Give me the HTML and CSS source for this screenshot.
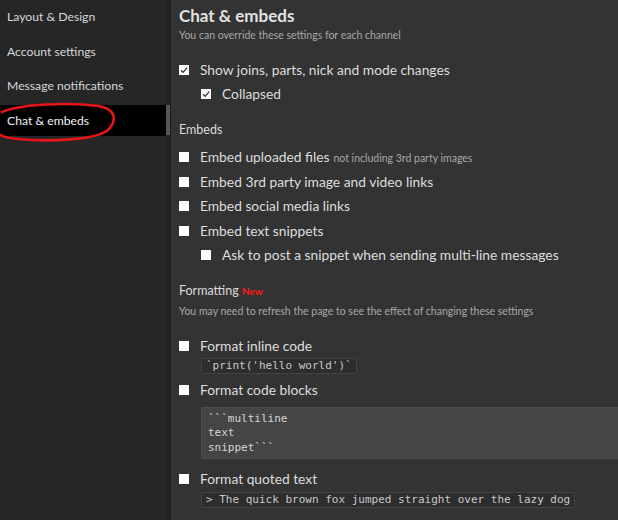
FILE: index.html
```html
<!DOCTYPE html>
<html>
<head>
<meta charset="utf-8">
<link rel="stylesheet" href="styles.css">
</head>
<body>
<div class="app">
  <nav class="sidebar">
    <div class="nav-item">Layout &amp; Design</div>
    <div class="nav-item">Account settings</div>
    <div class="nav-item">Message notifications</div>
    <div class="nav-item active">Chat &amp; embeds</div>
    <svg class="annot" width="130" height="50" viewBox="0 0 130 50">
      <path d="M2 10 C 20 2, 70 0, 98 4 C 118 7, 116 20, 108 28 C 96 38, 50 40, 18 37 C 6 36, 0 34, -2 31" fill="none" stroke="#e8141c" stroke-width="2.6" stroke-linecap="round"/>
    </svg>
  </nav>
  <div class="scroll"><div class="thumb"></div></div>
  <main class="main">
    <h1 class="title">Chat &amp; embeds</h1>
    <div class="sub">You can override these settings for each channel</div>

    <div class="group first">
      <div class="row"><span class="cb checked"><svg viewBox="0 0 10 10"><path d="M2 5.2 L4.2 7.3 L8.2 2.6" fill="none" stroke="#333" stroke-width="1.3"/></svg></span>Show joins, parts, nick and mode changes</div>
      <div class="row indent"><span class="cb checked"><svg viewBox="0 0 10 10"><path d="M2 5.2 L4.2 7.3 L8.2 2.6" fill="none" stroke="#333" stroke-width="1.3"/></svg></span>Collapsed</div>
    </div>

    <h2 class="section">Embeds</h2>
    <div class="group embeds">
      <div class="row"><span class="cb"></span>Embed uploaded files <small class="note">not including 3rd party images</small></div>
      <div class="row"><span class="cb"></span>Embed 3rd party image and video links</div>
      <div class="row"><span class="cb"></span>Embed social media links</div>
      <div class="row"><span class="cb"></span>Embed text snippets</div>
      <div class="row indent"><span class="cb"></span>Ask to post a snippet when sending multi-line messages</div>
    </div>

    <h2 class="section fmt">Formatting <span class="new">New</span></h2>
    <div class="sub">You may need to refresh the page to see the effect of changing these settings</div>

    <div class="group formats">
      <div class="row"><span class="cb"></span>Format inline code</div>
      <div class="example"><code class="inline">`print('hello world')`</code></div>
      <div class="row r2"><span class="cb"></span>Format code blocks</div>
      <pre class="block">```multiline
text
snippet```</pre>
      <div class="row r3"><span class="cb"></span>Format quoted text</div>
      <div class="example"><code class="inline">&gt; The quick brown fox jumped straight over the lazy dog</code></div>
    </div>
  </main>
</div>
</body>
</html>
```
FILE: styles.css
```css
html, body {
  margin: 0;
  padding: 0;
  background: #333333;
  height: 100%;
  overflow: hidden;
}
.app {
  display: flex;
  height: 520px;
  font-family: Lato, "Open Sans", sans-serif;
}
.sidebar {
  position: relative;
  width: 166px;
  flex: none;
  background: #262626;
  padding-top: 1px;
  display: flex;
  flex-direction: column;
  gap: 3.5px;
}
.nav-item {
  height: 31px;
  line-height: 31px;
  padding-left: 7px;
  font-size: 12.2px;
  color: #d3d8dc;
  white-space: nowrap;
}
.nav-item.active {
  background: #000;
  color: #eef2f5;
}
.annot {
  position: absolute;
  left: 0;
  top: 102px;
  overflow: visible;
}
.scroll {
  width: 4px;
  flex: none;
  background: #232323;
  border-right: 1px solid #1c1c1c;
  padding-top: 105px;
}
.thumb {
  height: 30px;
  background: #565656;
}
.main {
  flex: 1;
  padding-left: 8px;
  color: #dedede;
  min-width: 0;
}
.title {
  margin: 0;
  padding-top: 4px;
  font-size: 17px;
  font-weight: 700;
  line-height: 24px;
  color: #e2e2e2;
}
.sub {
  font-size: 10.5px;
  line-height: 14px;
  color: #a8a8a8;
  white-space: nowrap;
}
.group.first {
  margin-top: 16px;
}
.row {
  box-sizing: border-box;
  display: flex;
  align-items: center;
  height: 24px;
  padding-bottom: 1.5px;
  font-size: 13.8px;
  white-space: nowrap;
}
.embeds .row {
  height: 24.5px;
}
.row.indent {
  padding-left: 22px;
}
.cb {
  width: 10px;
  height: 10px;
  background: #fff;
  margin-right: 11px;
  margin-top: 1px;
  flex: none;
  display: flex;
}
.cb svg {
  width: 10px;
  height: 10px;
}
.note {
  font-size: 10.5px;
  color: #a8a8a8;
  margin-left: 4px;
  padding-top: 2px;
}
.section {
  margin: 14px 0 0;
  font-size: 12.5px;
  font-weight: 400;
  line-height: 20px;
  color: #dcdcdc;
}
.embeds {
  margin-top: 5px;
}
.section.fmt {
  margin-top: 13.5px;
  margin-bottom: 3px;
}
.new {
  color: #ff1a1a;
  font-size: 10px;
  font-weight: 700;
}
.formats {
  margin-top: 16px;
}
.example {
  display: flex;
  align-items: flex-start;
  padding-left: 22px;
  height: 16px;
}
.inline {
  display: block;
  font-family: "DejaVu Sans Mono", monospace;
  font-size: 11px;
  line-height: 14px;
  padding: 0 4px;
  background: #2d2d2d;
  border: 1px solid #434343;
  border-radius: 2px;
  color: #c8c8c8;
  white-space: nowrap;
}
.row.r2 {
  margin-top: 4px;
}
.block {
  margin: 5px 0 0 22px;
  padding: 4px 6px 3px;
  font-family: "DejaVu Sans Mono", monospace;
  font-size: 11px;
  line-height: 14.3px;
  background: #454545;
  border: 1px solid #4c4c4c;
  border-right: none;
  border-radius: 2px 0 0 2px;
  color: #d4d4d4;
}
.row.r3 {
  margin-top: 8px;
  margin-bottom: 1px;
}
```
